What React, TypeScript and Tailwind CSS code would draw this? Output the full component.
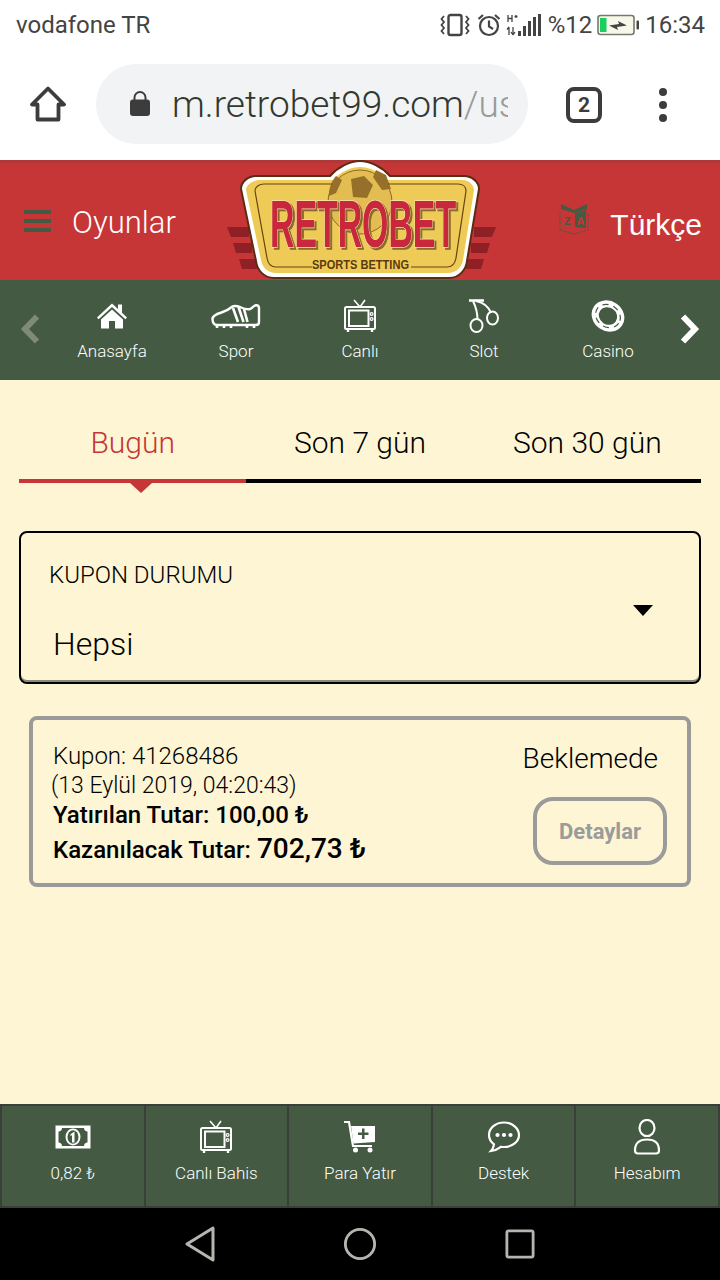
import React from "react";

const Tv = ({ className = "" }: { className?: string }) => (
  <svg viewBox="0 0 32 34" className={className} fill="none" stroke="#fff">
    <path d="M10 1l6 7 5-7" strokeWidth="1.6" />
    <rect x="1" y="8" width="30" height="22" rx="1.5" strokeWidth="2" />
    <rect x="5" y="11.500" width="19.500" height="15.500" strokeWidth="2" />
    <circle cx="27.600" cy="15" r="1.400" strokeWidth="1.200" />
    <circle cx="27.600" cy="20" r="1.400" strokeWidth="1.200" />
    <path d="M4 30v3M28 30v3" strokeWidth="2.400" />
  </svg>
);

const HomeSolid = () => (
  <svg viewBox="0 0 30 26" className="w-[30px] h-[26px]" fill="#fff">
    <path d="M15 0.500L21 6V1.500h4v8.200L30 14.500l-1.600 1.700L15 4 1.600 16.200 0 14.500z" />
    <path d="M15 6.500L26 16.500V25.500H18V18h-6v7.500H4V16.500z" />
  </svg>
);

const Boot = () => (
  <svg viewBox="0 0 50 24" className="w-[50px] h-[24px]" fill="none" stroke="#fff">
    <path d="M1.500 15c0-3.500 4-5 9-6.500 4-1.200 8-3.500 11-6 3-1.500 6 0 8.500 1 3 1.300 6.500 2 9 1.500 2-.5 3-2.500 5-3.500 2-.5 3.500 0 4 2v14.500c0 2-1 3-3 3H6c-3 0-4.500-2.500-4.500-6z" strokeWidth="2.400" />
    <path d="M22 4l5 14M27.500 3l5 15M33 5l3.500 13" strokeWidth="2.600" />
    <path d="M6 21v3M13 21v3M20 21v3M36 21v3M43 21v3" strokeWidth="2.600" />
  </svg>
);

const Cherries = () => (
  <svg viewBox="0 0 32 34" className="w-[32px] h-[34px]" fill="none" stroke="#fff" strokeWidth="2">
    <path d="M1 1.500h15" strokeWidth="2.600" />
    <path d="M5 2c3 6 4.500 12 4.500 19M8 2c5 1 12 4 15 12" />
    <ellipse cx="8.500" cy="26.500" rx="6" ry="6.500" />
    <ellipse cx="24.500" cy="19" rx="5.500" ry="6.500" />
  </svg>
);

const Chip = () => (
  <svg viewBox="0 0 36 34" className="w-[36px] h-[34px]">
    <g transform="rotate(35 18 17)">
      <ellipse cx="18" cy="17" rx="17" ry="15" fill="#fff" />
      <ellipse cx="18" cy="17" rx="13" ry="11" fill="none" stroke="#445a42" strokeWidth="1.200" strokeDasharray="6 5" />
      <ellipse cx="18" cy="17" rx="9.500" ry="8.500" fill="#445a42" />
    </g>
  </svg>
);

const Money = () => (
  <svg viewBox="0 0 36 24" className="w-[36px] h-[24px]">
    <rect x="0.500" y="0.500" width="35" height="23" fill="#fff" />
    <path d="M7 3H29C29 5 30.500 6.500 32.500 6.500V17.500C30.500 17.500 29 19 29 21H7C7 19 5.500 17.500 3.500 17.500V6.500C5.500 6.500 7 5 7 3z" fill="#445a42" />
    <ellipse cx="18" cy="12" rx="7.500" ry="8.500" fill="#fff" />
    <ellipse cx="18" cy="12" rx="5.500" ry="6.800" fill="#445a42" />
    <path d="M15.500 9.200L19.500 6.500V17.500H17V10.200L15.500 11z" fill="#fff" />
  </svg>
);

const Cart = () => (
  <svg viewBox="0 0 32 32" className="w-[32px] h-[32px]">
    <path d="M0 1h5l4 24h19" fill="none" stroke="#fff" strokeWidth="2.200" />
    <path fillRule="evenodd" fill="#fff" d="M7 5h24v16l-21.500 1.500zM18 7.500v4h-4v2.500h4v4h2.500v-4h4v-2.500h-4v-4z" />
    <circle cx="11.500" cy="29" r="2.500" fill="#fff" />
    <circle cx="26" cy="29" r="2.500" fill="#fff" />
  </svg>
);

const Chat = () => (
  <svg viewBox="0 0 34 32" className="w-[34px] h-[32px]" fill="none">
    <path d="M17 1.500C8.500 1.500 2 7 2 14c0 3.800 2 7 5 9.300-.3 2.500-1.500 5-3 6.700 3.800-.6 7.500-2.300 10-4.200 1 .2 2 .2 3 .2 8.500 0 15-5.500 15-12S25.500 1.500 17 1.500z" stroke="#fff" strokeWidth="2.200" />
    <circle cx="10.500" cy="14" r="2.100" fill="#fff" />
    <circle cx="17" cy="14" r="2.100" fill="#fff" />
    <circle cx="23.500" cy="14" r="2.100" fill="#fff" />
  </svg>
);

const User = () => (
  <svg viewBox="0 0 28 36" className="w-[28px] h-[36px]" fill="none" stroke="#fff" strokeWidth="2.200">
    <ellipse cx="14" cy="9" rx="7.500" ry="8" />
    <path d="M5 34.500h18c2 0 3-1 3-3 0-7-4-11-12-11S2 24.500 2 31.500c0 2 1 3 3 3z" />
  </svg>
);

const Logo = () => (
  <svg viewBox="0 0 280 120" className="w-[280px] h-[120px]">
    <g fill="#8f2126">
      <path d="M3 67h22v10H7zM9 83h19v10H12zM15 99h19v10H18z" />
      <path d="M272 67h-22v10h18zM266 83h-19v10h16zM260 99h-19v10h16z" />
    </g>
    <path d="M32 16H106C114 7 126 1 136 1s22 6 30 15H240c8 0 15 6 15 13L243 101c-1 9-8 17-18 17H50c-10 0-17-8-18-17L17 29c0-7 7-13 15-13z" fill="#fff" stroke="#5c2c12" strokeWidth="2" />
    <path d="M36 20H110C116 11 128 7 136 7s20 4 26 13H238c7 0 12 5 12 10L239 100c-1 7-7 13-15 13H52c-8 0-14-6-15-13L22 30c0-5 7-10 14-10z" fill="#eecb57" />
    <circle cx="136" cy="42" r="32" fill="#e3bc52" stroke="#8c6a24" strokeWidth="1" />
    <path d="M127 19l13-3 9 9-6 13-14-1zM152 10l10 5 5 14-9 1-9-13zM112 16l6 4-6 13-7 3c0-8 2-14 7-20z" fill="#96702a" />
    <path d="M40 24h68M164 24h70c5 0 8 3 8 7L232 98c-1 6-4 9-9 9h-36M88 107H52c-5 0-8-3-9-9L31 31c0-4 4-7 9-7" fill="none" stroke="#6a4212" strokeWidth="1.200" />
    <g className="drop-shadow-[2px_2px_0_#8a6a28]">
      <text transform="translate(46 87) scale(0.505 1)" fontFamily="'Liberation Sans', sans-serif" fontWeight="700" fontSize="67" fill="#c9283c" stroke="#f6e6b6" strokeWidth="1.400" paintOrder="stroke">RETROBET</text>
    </g>
    <text x="88" y="109" textLength="97" lengthAdjust="spacingAndGlyphs" fontFamily="'Liberation Sans', sans-serif" fontWeight="700" fontSize="12.500" fill="#5b3a10">SPORTS BETTING</text>
  </svg>
);

const NavItem = ({ icon, label }: { icon: React.ReactNode; label: string }) => (
  <div className="flex-1 flex flex-col items-center">
    <div className="h-[34px] flex items-center justify-center">{icon}</div>
    <div className="mt-[8px] text-[17px] leading-[20px] font-light text-white">{label}</div>
  </div>
);

const FootItem = ({ icon, label }: { icon: React.ReactNode; label: string }) => (
  <div className="flex-1 flex flex-col items-center bg-[#445a42] border-r-2 last:border-r-0 border-[#3a3f38] pt-[13px]">
    <div className="h-[36px] flex items-center justify-center">{icon}</div>
    <div className="mt-[7px] text-[17px] leading-[22px] font-light text-white">{label}</div>
  </div>
);

export default function App() {
  return (
    <div className="w-[720px] h-[1280px] flex flex-col overflow-hidden bg-[#fdf5d3] font-['Roboto',sans-serif]">
      {/* status bar */}
      <div className="h-[50px] bg-white flex items-center pl-[16px] pr-[15px] text-[#444] text-[24px] leading-none">
        <span>vodafone TR</span>
        <div className="ml-auto flex items-center">
          <svg viewBox="0 0 30 24" className="w-[30px] h-[24px]" fill="none" stroke="#444">
            <rect x="8.500" y="2" width="13" height="20" rx="2" strokeWidth="2.400" />
            <path d="M4 3l-2.500 3L4 9 1.500 12 4 15l-2.500 3L4 21M26 3l2.500 3L26 9l2.500 3L26 15l2.500 3L26 21" strokeWidth="1.800" />
          </svg>
          <svg viewBox="0 0 24 24" className="ml-[7px] w-[24px] h-[24px]" fill="none" stroke="#444" strokeWidth="2.200">
            <circle cx="12" cy="13" r="9" />
            <path d="M12 7.500V13.500l4 2.500M1.500 6L6 2M22.500 6L18 2" />
          </svg>
          <svg viewBox="0 0 38 24" className="ml-[5px] w-[38px] h-[24px]" fill="#444">
            <path d="M2 2v7M6 2v7M2 5.500h4M8.500 3.500h3M10 2v3" stroke="#444" strokeWidth="1.300" fill="none" />
            <path d="M3 14v8M1 16.500l2-2.500M7 14v8M7 22l-2-3 M9 19l-2 3" stroke="#444" strokeWidth="1.300" fill="none" />
            <path d="M13 18h3v5h-3zM18 13h3v10h-3zM23 8h3v15h-3zM28 4h3v19h-3zM33 1h3v22h-3z" transform="translate(-1 0)" />
          </svg>
          <span className="ml-[4px]">%12</span>
          <svg viewBox="0 0 42 22" className="ml-[5px] w-[42px] h-[22px]">
            <rect x="1" y="1.500" width="36" height="19" rx="2.500" fill="#f8f8ea" stroke="#77776c" strokeWidth="1.600" />
            <rect x="3" y="4" width="6.500" height="14" fill="#19cf5f" />
            <path d="M12 11.500L22 10l-1-3 9 4.500-10 1.500 1 3z" fill="#444" />
            <rect x="39.500" y="6.500" width="2.500" height="9" rx="1" fill="#444" />
          </svg>
          <span className="ml-[6px]">16:34</span>
        </div>
      </div>
      {/* browser bar */}
      <div className="h-[110px] bg-white flex items-start relative">
        <svg viewBox="0 0 36 36" className="absolute left-[30px] top-[36px] w-[36px] h-[36px]" fill="none" stroke="#3c3c3c" strokeWidth="3.800">
          <path d="M18 2.500L34 18.500H28.500V33.500H7.500V18.500H2z" strokeLinejoin="round" />
        </svg>
        <div className="ml-[96px] mt-[14px] w-[432px] h-[80px] rounded-[40px] bg-[#f1f3f4] flex items-center pl-[34px] pr-[20px] overflow-hidden">
          <svg viewBox="0 0 20 26" className="w-[20px] h-[26px] shrink-0" fill="#3c3c3c">
            <path d="M4.500 9V6.500a5.500 5.500 0 0 1 11 0V9" fill="none" stroke="#3c3c3c" strokeWidth="2" />
            <rect x="0" y="8.500" width="20" height="16.500" rx="3" />
          </svg>
          <div className="ml-[22px] text-[37px] leading-none font-light text-[#33382f] whitespace-nowrap overflow-hidden">m.retrobet99.com<span className="text-[#9a9a9a]">/us</span></div>
        </div>
        <div className="absolute left-[566px] top-[37px] w-[36px] h-[36px] rounded-[8px] border-[4px] border-[#3c3c3c] flex items-center justify-center text-[21px] font-bold text-[#3c3c3c] leading-none">2</div>
        <div className="absolute left-[659px] top-[38px] flex flex-col gap-[5px]">
          <span className="w-[8px] h-[8px] rounded-full bg-[#3c3c3c]" />
          <span className="w-[8px] h-[8px] rounded-full bg-[#3c3c3c]" />
          <span className="w-[8px] h-[8px] rounded-full bg-[#3c3c3c]" />
        </div>
      </div>
      {/* header */}
      <div className="h-[120px] bg-[#c73636] border-t-[3px] border-[#b33638] relative flex items-center">
        <div className="ml-[24px] flex flex-col gap-[5px] -mt-[1px]">
          <span className="w-[27px] h-[4px] bg-[#445a42]" />
          <span className="w-[27px] h-[4px] bg-[#445a42]" />
          <span className="w-[27px] h-[4px] bg-[#445a42]" />
        </div>
        <span className="ml-[21px] mt-[1px] text-[31px] leading-none font-light text-white">Oyunlar</span>
        <div className="absolute left-[224px] -top-[3px]"><Logo /></div>
        <div className="ml-auto mr-[18px] flex items-center mt-[6px]">
          <svg viewBox="0 0 32 34" className="w-[32px] h-[34px] -mt-[12px]" fill="none">
            <path d="M2 11v17l14 4 14-4V11" stroke="#445a42" strokeWidth="1" strokeDasharray="2 1" />
            <path d="M3 2l13 6v3L3 7zM29 2L16 8v3l13-4z" fill="#445a42" />
            <path d="M17 11l11-3v18l-11-1z" fill="#445a42" />
            <text x="6" y="23" fontSize="11" fontWeight="700" fill="#445a42" fontFamily="'Liberation Sans',sans-serif">Z</text>
            <text x="18.500" y="23" fontSize="11" fontWeight="700" fill="#c73636" fontFamily="'Liberation Sans',sans-serif">A</text>
          </svg>
          <span className="ml-[20px] text-[30px] leading-none text-white font-['Liberation_Sans',sans-serif]">Türkçe</span>
        </div>
      </div>
      {/* nav */}
      <div className="h-[100px] bg-[#445a42] flex pt-[19px]">
        <div className="w-[50px] flex items-start pl-[20px] pt-[15px]">
          <svg viewBox="0 0 20 30" className="w-[20px] h-[30px]" fill="none" stroke="#7f8a78" strokeWidth="6"><path d="M17 2.500L5 15l12 12.500" /></svg>
        </div>
        <NavItem icon={<HomeSolid />} label="Anasayfa" />
        <NavItem icon={<Boot />} label="Spor" />
        <NavItem icon={<Tv className="w-[32px] h-[34px]" />} label="Canlı" />
        <NavItem icon={<Cherries />} label="Slot" />
        <NavItem icon={<Chip />} label="Casino" />
        <div className="w-[50px] flex items-start justify-end pr-[20px] pt-[15px]">
          <svg viewBox="0 0 20 30" className="w-[20px] h-[30px]" fill="none" stroke="#fff" strokeWidth="6"><path d="M3 2.500L15 15 3 27.500" /></svg>
        </div>
      </div>
      {/* content */}
      <div className="flex-1 px-[19px]">
        <div className="pt-[43px] flex h-[103px] relative border-b-[4px] border-black font-light">
          <div className="flex-1 text-center text-[#c73636] text-[30px] leading-[40px]">Bugün</div>
          <div className="flex-1 text-center text-black text-[30px] leading-[40px]">Son 7 gün</div>
          <div className="flex-1 text-center text-black text-[30px] leading-[40px]">Son 30 gün</div>
          <div className="absolute left-0 -bottom-[4px] w-[227px] h-[4px] bg-[#c73636]" />
          <div className="absolute left-[111px] -bottom-[14px] w-0 h-0 border-l-[11px] border-r-[11px] border-t-[10px] border-l-transparent border-r-transparent border-t-[#c73636]" />
        </div>
        <div className="mt-[48px] h-[153px] rounded-[8px] border-2 border-black relative shadow-[inset_0_-2px_0_#8a8a78] pl-[28px] pt-[28px]">
          <div className="text-[24px] leading-[28px] font-light text-black">KUPON DURUMU</div>
          <div className="ml-[4px] mt-[36px] text-[32px] leading-[38px] font-light text-black">Hepsi</div>
          <div className="absolute right-[46px] top-[72px] w-0 h-0 border-l-[10px] border-r-[10px] border-t-[11px] border-l-transparent border-r-transparent border-t-black" />
        </div>
        <div className="mx-[10px] mt-[32px] h-[171px] rounded-[8px] border-[4px] border-[#9a9a9a] flex justify-between pl-[20px] pr-[20px] pt-[21px]">
          <div className="text-black">
            <div className="text-[24px] leading-[30px] font-light">Kupon: 41268486</div>
            <div className="text-[23px] leading-[30px] font-light -ml-[2px]">(13 Eylül 2019, 04:20:43)</div>
            <div className="text-[24px] leading-[30px] font-medium -mt-px">Yatırılan Tutar: 100,00 ₺</div>
            <div className="text-[24px] leading-[36px] mt-[1px] font-medium">Kazanılacak Tutar: <span className="text-[28px]">702,73 ₺</span></div>
          </div>
          <div className="flex flex-col items-end">
            <div className="text-[28px] leading-[34px] font-light text-black mr-[9px] mt-[1px]">Beklemede</div>
            <div className="mt-[21px] w-[134px] h-[68px] rounded-[20px] border-[4px] border-[#9b9b9b] flex items-center justify-center text-[22px] font-bold text-[#9b9b9b]">Detaylar</div>
          </div>
        </div>
      </div>
      {/* footer */}
      <div className="h-[104px] flex border-2 border-[#3a3f38] bg-[#445a42]">
        <FootItem icon={<Money />} label="0,82 ₺" />
        <FootItem icon={<Tv className="w-[32px] h-[34px]" />} label="Canlı Bahis" />
        <FootItem icon={<Cart />} label="Para Yatır" />
        <FootItem icon={<Chat />} label="Destek" />
        <FootItem icon={<User />} label="Hesabım" />
      </div>
      {/* android nav */}
      <div className="h-[72px] bg-black flex items-center justify-center shrink-0">
        <div className="w-[160px] flex justify-center">
          <svg viewBox="0 0 32 36" className="w-[32px] h-[36px]" fill="none" stroke="#b5b5b0" strokeWidth="3" strokeLinejoin="round"><path d="M29 2v32L3 18z" /></svg>
        </div>
        <div className="w-[160px] flex justify-center">
          <svg viewBox="0 0 36 36" className="w-[34px] h-[34px]" fill="none" stroke="#b5b5b0" strokeWidth="3"><circle cx="18" cy="18" r="15.500" /></svg>
        </div>
        <div className="w-[160px] flex justify-center">
          <svg viewBox="0 0 32 32" className="w-[30px] h-[30px]" fill="none" stroke="#b5b5b0" strokeWidth="3"><rect x="2" y="2" width="28" height="28" rx="2" /></svg>
        </div>
      </div>
    </div>
  );
}
